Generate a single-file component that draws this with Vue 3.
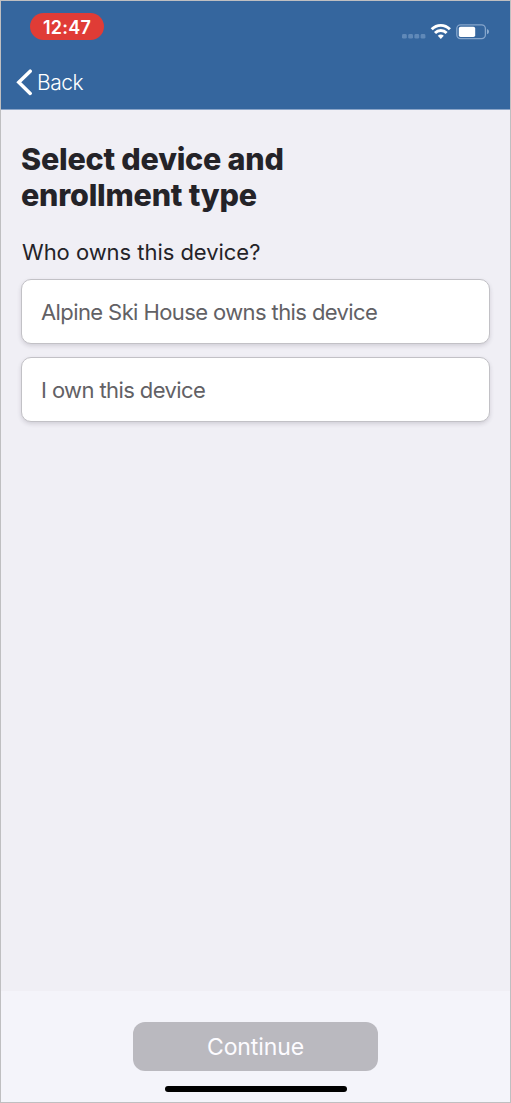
<script setup>
const owners = [
  { id: 'company', label: 'Alpine Ski House owns this device' },
  { id: 'personal', label: 'I own this device' },
]
</script>

<template>
  <div class="screen">
    <header class="header">
      <div class="status">
        <span class="clock">12:47</span>
        <svg class="indicators" width="88" height="18" viewBox="0 0 88 18" aria-hidden="true">
          <g fill="#6089b8">
            <rect x="0" y="11" width="4.8" height="4.6" rx="1.4" />
            <rect x="6.2" y="11" width="4.8" height="4.6" rx="1.4" />
            <rect x="12.4" y="11" width="4.8" height="4.6" rx="1.4" />
            <rect x="18.6" y="11" width="4.8" height="4.6" rx="1.4" />
          </g>
          <g fill="none" stroke="#fff" stroke-width="2.9">
            <path d="M29.7 6.3 C34.9 1 42.7 1 47.9 6.3" />
            <path d="M33 10 C36.2 6.7 41.4 6.7 44.6 10" />
          </g>
          <path d="M35.8 12.8 C37.6 11 40 11 41.8 12.8 L38.8 16 Z" fill="#fff" />
          <rect x="54.8" y="1.8" width="28.6" height="13.8" rx="3.8" fill="none" stroke="#86a6cc" stroke-width="1.3" />
          <rect x="56.8" y="3.7" width="16.4" height="10.4" rx="1.8" fill="#fff" />
          <path d="M85 6.1 Q87 6.8 87 8.7 Q87 10.6 85 11.3 Z" fill="#8eadd0" />
        </svg>
      </div>
      <button class="back" type="button">
        <svg width="17" height="28" viewBox="0 0 17 28" aria-hidden="true">
          <path d="M15.2 3.2 L3.8 14.3 L15.2 25.4" fill="none" stroke="#fff" stroke-width="3.5" stroke-linecap="round" stroke-linejoin="miter" />
        </svg>
        <span>Back</span>
      </button>
    </header>
    <main class="content">
      <h1>Select device and<br />enrollment type</h1>
      <p class="question">Who owns this device?</p>
      <div class="options">
        <button v-for="owner in owners" :key="owner.id" :class="['option', owner.id]" type="button">
          {{ owner.label }}
        </button>
      </div>
    </main>
    <footer class="footer">
      <button class="continue" type="button">Continue</button>
      <div class="home-indicator"></div>
    </footer>
  </div>
</template>

<style>
body {
  margin: 0;
}
</style>

<style scoped>
.screen {
  box-sizing: border-box;
  width: 511px;
  height: 1103px;
  display: flex;
  flex-direction: column;
  border: 1px solid #bfbfc1;
  background: #f0eff5;
  font-family: Inter, "Liberation Sans", sans-serif;
  overflow: hidden;
}
button {
  font: inherit;
  border: 0;
  margin: 0;
  padding: 0;
}
.header {
  box-sizing: border-box;
  height: 109px;
  flex: none;
  background: #35669e;
  border-bottom: 1px solid #8ba5c8;
  color: #fff;
}
.status {
  display: flex;
  justify-content: space-between;
  padding: 12px 20px 0 29px;
}
.clock {
  width: 74px;
  height: 27px;
  border-radius: 14px;
  background: #e03c36;
  text-align: center;
  font-size: 18px;
  font-weight: 600;
  line-height: 29px;
  letter-spacing: 0.2px;
}
.indicators {
  margin-top: 10px;
}
.back {
  display: flex;
  align-items: center;
  height: 28px;
  margin: 27px 0 0 14px;
  background: none;
  color: #fff;
  font-size: 21px;
  font-weight: 350;
  line-height: 30px;
  letter-spacing: -0.5px;
}
.back span {
  margin-left: 5px;
  padding-top: 1px;
}
.content {
  flex: 1;
  padding: 31px 20px 0;
}
h1 {
  margin: 0;
  color: #242328;
  font-size: 30.5px;
  font-weight: 800;
  line-height: 36px;
  letter-spacing: -0.22px;
}
.question {
  margin: 24px 0 0 1px;
  color: #242328;
  font-size: 22px;
  font-weight: 370;
  line-height: 30px;
  letter-spacing: -0.04px;
}
.options {
  display: flex;
  flex-direction: column;
  gap: 13px;
  margin-top: 12px;
}
.option {
  box-sizing: border-box;
  height: 65px;
  padding: 1px 0 0 19px;
  border: 1px solid #c2c1c6;
  border-radius: 10px;
  background: #fff;
  box-shadow: 0 2px 4px rgba(50, 45, 65, 0.16);
  color: #626165;
  font-size: 22px;
  font-weight: 370;
  letter-spacing: -0.6px;
  text-align: left;
}
.footer {
  display: flex;
  flex-direction: column;
  align-items: center;
  height: 111px;
  flex: none;
  background: #f4f4fa;
}
.continue {
  width: 245px;
  height: 49px;
  margin-top: 31px;
  padding-top: 1px;
  border-radius: 12px;
  background: #bab9bf;
  color: #fdfcff;
  font-size: 23px;
  letter-spacing: -0.1px;
}
.home-indicator {
  width: 182px;
  height: 6px;
  margin-top: 15px;
  border-radius: 3px;
  background: #000;
}
</style>
